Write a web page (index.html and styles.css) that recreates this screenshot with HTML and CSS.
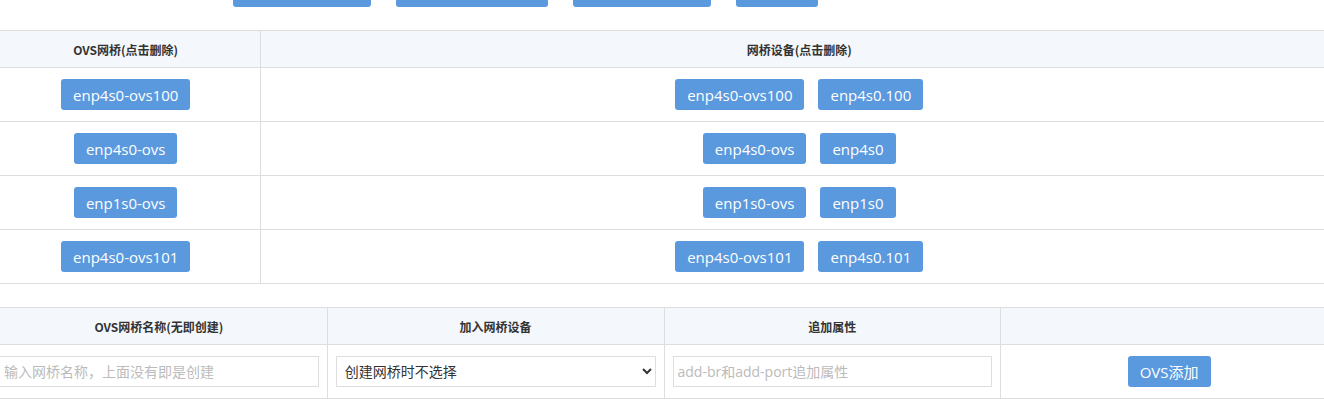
FILE: index.html
```html
<!DOCTYPE html>
<html>
<head>
    <meta charset="utf-8">
    <link rel="stylesheet" href="styles.css">
</head>
<body>
    <div id="page">
        <div id="toolbar">
            <button class="btn" style="width: 138px" title="刷新网桥列表"></button>
            <button class="btn" style="width: 152px" title="查看OVS配置信息"></button>
            <button class="btn" style="width: 138px" title="重启OVS服务"></button>
            <button class="btn" style="width: 82px" title="帮助"></button>
        </div>

        <table class="grid" id="bridge-table">
            <tr>
                <th class="col-bridge">OVS网桥(点击删除)</th>
                <th>网桥设备(点击删除)</th>
            </tr>
            <tr>
                <td><button class="btn">enp4s0-ovs100</button></td>
                <td><div class="ports"><button class="btn">enp4s0-ovs100</button><button class="btn">enp4s0.100</button></div></td>
            </tr>
            <tr>
                <td><button class="btn">enp4s0-ovs</button></td>
                <td><div class="ports"><button class="btn">enp4s0-ovs</button><button class="btn">enp4s0</button></div></td>
            </tr>
            <tr>
                <td><button class="btn">enp1s0-ovs</button></td>
                <td><div class="ports"><button class="btn">enp1s0-ovs</button><button class="btn">enp1s0</button></div></td>
            </tr>
            <tr>
                <td><button class="btn">enp4s0-ovs101</button></td>
                <td><div class="ports"><button class="btn">enp4s0-ovs101</button><button class="btn">enp4s0.101</button></div></td>
            </tr>
        </table>

        <table class="grid" id="add-table">
            <tr>
                <th>OVS网桥名称(无即创建)</th>
                <th>加入网桥设备</th>
                <th>追加属性</th>
                <th></th>
            </tr>
            <tr>
                <td class="field"><input type="text" class="text-input" placeholder="输入网桥名称，上面没有即是创建"></td>
                <td class="field">
                    <select class="text-input">
                        <option>创建网桥时不选择</option>
                        <option>enp4s0</option>
                        <option>enp1s0</option>
                    </select>
                </td>
                <td class="field"><input type="text" class="text-input" placeholder="add-br和add-port追加属性"></td>
                <td class="field"><button class="btn">OVS添加</button></td>
            </tr>
        </table>
    </div>
</body>
</html>
```

FILE: styles.css
```css
body{
    margin: 0;
    overflow: hidden;
    background-color: white;
    font-family: "Open Sans", "Noto Sans CJK SC", sans-serif;
    color: rgb(51, 51, 51);
}

#page{
    width: 1348px;
    margin-left: -10px;
    margin-top: -24px;
}

#toolbar{
    display: flex;
    gap: 25px;
    padding-left: 243px;
}

.btn{
    height: 31px;
    padding: 0 12px;
    border: none;
    border-radius: 3px;
    background-color: rgb(90, 153, 222);
    color: white;
    font-family: "Open Sans", "Noto Sans CJK SC", sans-serif;
    font-size: 15px;
    cursor: pointer;
}

.grid{
    width: 100%;
    border-collapse: collapse;
    table-layout: fixed;
    margin-top: 23px;
}

.grid th, .grid td{
    border: 1px solid rgb(222, 222, 222);
    text-align: center;
}

.grid th{
    height: 36px;
    padding: 0;
    background-color: rgb(244, 248, 252);
    font-family: "Noto Sans CJK SC", sans-serif;
    font-size: 12px;
    font-weight: bold;
    color: rgb(51, 51, 51);
}

.grid td{
    padding: 11px 0;
    height: 31px;
}

.col-bridge{
    width: 20%;
}

.ports{
    display: flex;
    justify-content: center;
    gap: 14px;
}

.grid td.field{
    padding: 11px 8px;
}

.text-input{
    box-sizing: border-box;
    width: 100%;
    height: 31px;
    padding: 0 4px;
    border: 1px solid rgb(222, 222, 222);
    border-radius: 0;
    background-color: white;
    font-family: "Open Sans", "Noto Sans CJK SC", sans-serif;
    font-size: 14px;
    color: rgb(51, 51, 51);
    outline: none;
}

.text-input::placeholder{
    color: rgb(187, 187, 187);
}

select.text-input{
    padding: 0 4px;
}
```
